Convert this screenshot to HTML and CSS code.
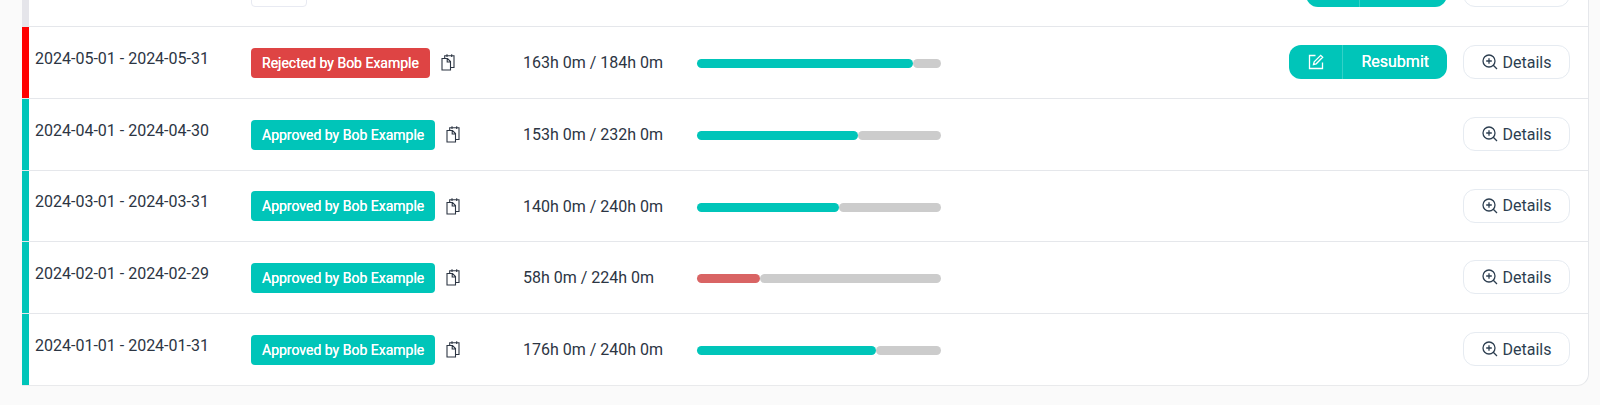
FILE: index.html
```html
<!DOCTYPE html>
<html lang="en">
<head>
  <meta charset="UTF-8">
  <meta name="viewport" content="width=device-width, initial-scale=1.0">
  <title>Timesheets</title>
  <link rel="stylesheet" href="styles.css">
</head>
<body>
  <!-- Shared icons -->
  <svg class="icon-defs" aria-hidden="true">
    <symbol id="icon-copy" viewBox="0 0 14 17">
      <path d="M1 4.5H6.5L9.5 7.5V16H1Z M6.2 4.8V8H9.3 M3.7 4.2V1.8H13V13.5H9.8 M6 .3V3 M10.7 .3V3"/>
    </symbol>
    <symbol id="icon-edit" viewBox="0 0 16 16">
      <path d="M7.5 1.5H1.5V14.5H14.5V8.5 M5.5 10.5L6.2 7.8L12.7 1.3L14.7 3.3L8.2 9.8Z"/>
    </symbol>
    <symbol id="icon-zoom" viewBox="0 0 16 16">
      <path d="M13 7A6 6 0 1 1 1 7A6 6 0 0 1 13 7Z M11.3 11.3L15 15 M4.2 7H9.8 M7 4.2V9.8"/>
    </symbol>
  </svg>

  <div class="card">
    <table class="timesheets">
      <colgroup>
        <col class="col-period">
        <col class="col-status">
        <col class="col-hours">
        <col class="col-progress">
        <col>
      </colgroup>
      <tbody>
        <tr class="open">
          <td class="period"></td>
          <td><span class="badge empty"></span></td>
          <td></td>
          <td></td>
          <td>
            <div class="actions">
              <button class="submit" aria-label="Submit"><span class="submit-icon"></span><span class="submit-short"></span></button>
              <button class="details" aria-label="Details"></button>
            </div>
          </td>
        </tr>
        <tr class="rejected">
          <td class="period">2024-05-01 - 2024-05-31</td>
          <td>
            <div class="status">
              <span class="badge">Rejected by Bob Example</span>
              <button class="copy" aria-label="Copy"><svg><use href="#icon-copy"/></svg></button>
            </div>
          </td>
          <td>163h 0m / 184h 0m</td>
          <td><div class="progress"><div class="done" style="width: 88.6%"></div><div class="rest"></div></div></td>
          <td>
            <div class="actions">
              <button class="submit"><span class="submit-icon"><svg><use href="#icon-edit"/></svg></span><span class="submit-text">Resubmit</span></button>
              <button class="details"><svg><use href="#icon-zoom"/></svg>Details</button>
            </div>
          </td>
        </tr>
        <tr class="approved">
          <td class="period">2024-04-01 - 2024-04-30</td>
          <td>
            <div class="status">
              <span class="badge">Approved by Bob Example</span>
              <button class="copy" aria-label="Copy"><svg><use href="#icon-copy"/></svg></button>
            </div>
          </td>
          <td>153h 0m / 232h 0m</td>
          <td><div class="progress"><div class="done" style="width: 65.9%"></div><div class="rest"></div></div></td>
          <td>
            <div class="actions">
              <button class="details"><svg><use href="#icon-zoom"/></svg>Details</button>
            </div>
          </td>
        </tr>
        <tr class="approved">
          <td class="period">2024-03-01 - 2024-03-31</td>
          <td>
            <div class="status">
              <span class="badge">Approved by Bob Example</span>
              <button class="copy" aria-label="Copy"><svg><use href="#icon-copy"/></svg></button>
            </div>
          </td>
          <td>140h 0m / 240h 0m</td>
          <td><div class="progress"><div class="done" style="width: 58.3%"></div><div class="rest"></div></div></td>
          <td>
            <div class="actions">
              <button class="details"><svg><use href="#icon-zoom"/></svg>Details</button>
            </div>
          </td>
        </tr>
        <tr class="approved">
          <td class="period">2024-02-01 - 2024-02-29</td>
          <td>
            <div class="status">
              <span class="badge">Approved by Bob Example</span>
              <button class="copy" aria-label="Copy"><svg><use href="#icon-copy"/></svg></button>
            </div>
          </td>
          <td>58h 0m / 224h 0m</td>
          <td><div class="progress"><div class="done low" style="width: 25.9%"></div><div class="rest"></div></div></td>
          <td>
            <div class="actions">
              <button class="details"><svg><use href="#icon-zoom"/></svg>Details</button>
            </div>
          </td>
        </tr>
        <tr class="approved">
          <td class="period">2024-01-01 - 2024-01-31</td>
          <td>
            <div class="status">
              <span class="badge">Approved by Bob Example</span>
              <button class="copy" aria-label="Copy"><svg><use href="#icon-copy"/></svg></button>
            </div>
          </td>
          <td>176h 0m / 240h 0m</td>
          <td><div class="progress"><div class="done" style="width: 73.3%"></div><div class="rest"></div></div></td>
          <td>
            <div class="actions">
              <button class="details"><svg><use href="#icon-zoom"/></svg>Details</button>
            </div>
          </td>
        </tr>
      </tbody>
    </table>
  </div>
</body>
</html>
```

FILE: styles.css
```css
* {
  box-sizing: border-box;
}
body {
  margin: 0;
  background-color: #fafafa;
  color: #2c3543;
  font-family: Roboto, Arial, sans-serif;
  font-size: 16px;
  overflow: hidden;
}
button {
  font: inherit;
  color: inherit;
  cursor: pointer;
}
svg {
  display: block;
  fill: none;
  stroke: currentColor;
  stroke-width: 1.3;
}
.icon-defs {
  display: none;
}
.card {
  margin: -45px 11px 0 22px;
  border-right: 1px solid #e5e7eb;
  border-bottom: 1px solid #e9eaec;
  border-radius: 0 0 12px 0;
  background-color: #fff;
  overflow: hidden;
}
.timesheets {
  width: 100%;
  table-layout: fixed;
  border-spacing: 0;
}
.timesheets td {
  height: 72px;
  padding: 0;
  border-bottom: 1px solid #e5e7eb;
  vertical-align: middle;
  white-space: nowrap;
}
.timesheets tr:nth-child(4) td {
  height: 71px;
}
.timesheets tr:last-child td {
  height: 71px;
  border-bottom: 0;
}
.col-period {
  width: 229px;
}
.col-status {
  width: 272px;
}
.col-hours {
  width: 174px;
}
.col-progress {
  width: 244px;
}
.timesheets .period {
  padding: 0 0 9px 13px;
}
.open .period {
  box-shadow: inset 7px 0 #e5e5ea;
}
.rejected .period {
  box-shadow: inset 7px 0 #ff0000;
}
.approved .period {
  box-shadow: inset 7px 0 #00c5b9;
}
.status {
  display: flex;
  align-items: center;
  gap: 11px;
}
.badge {
  padding: 0 11px;
  border-radius: 4px;
  background-color: #00c5b9;
  color: #fff;
  font-size: 14px;
  line-height: 30px;
  text-shadow: 0 0 #fff;
}
.rejected .badge {
  background-color: #de4444;
}
.badge.empty {
  display: block;
  width: 56px;
  height: 32px;
  border: 1px solid #e8eaf2;
  background-color: #fff;
}
.copy {
  padding: 0;
  border: 0;
  background: none;
}
.copy svg {
  width: 14px;
  height: 17px;
  stroke-width: 1.1;
}
.progress {
  display: flex;
  height: 11px;
  padding-top: 2px;
}
.done {
  border-radius: 5px;
  background-color: #00c5b9;
}
.done.low {
  background-color: #d96464;
}
.rest {
  flex: 1;
  border-radius: 5px;
  background-color: #ccc;
}
.actions {
  display: flex;
  justify-content: flex-end;
  gap: 16px;
  padding: 0 18px 1px 0;
}
.submit {
  display: flex;
  height: 34px;
  padding: 0;
  border: 0;
  border-radius: 12px;
  background-color: #00c5b9;
  color: #fff;
  line-height: 34px;
  text-shadow: 0 0 #fff;
  overflow: hidden;
}
.submit-icon {
  display: flex;
  align-items: center;
  justify-content: center;
  width: 54px;
  height: 34px;
  border-right: 1px solid #33d1c7;
}
.submit-icon svg {
  width: 16px;
  height: 16px;
}
.submit-text {
  padding: 0 18px;
}
.submit-short {
  width: 87px;
}
.details {
  display: flex;
  align-items: center;
  justify-content: center;
  gap: 5px;
  width: 107px;
  height: 34px;
  padding: 0;
  border: 1px solid #e6ebf1;
  border-radius: 12px;
  background-color: #fff;
  color: #2c3e50;
}
.details svg {
  width: 16px;
  height: 16px;
}
```
